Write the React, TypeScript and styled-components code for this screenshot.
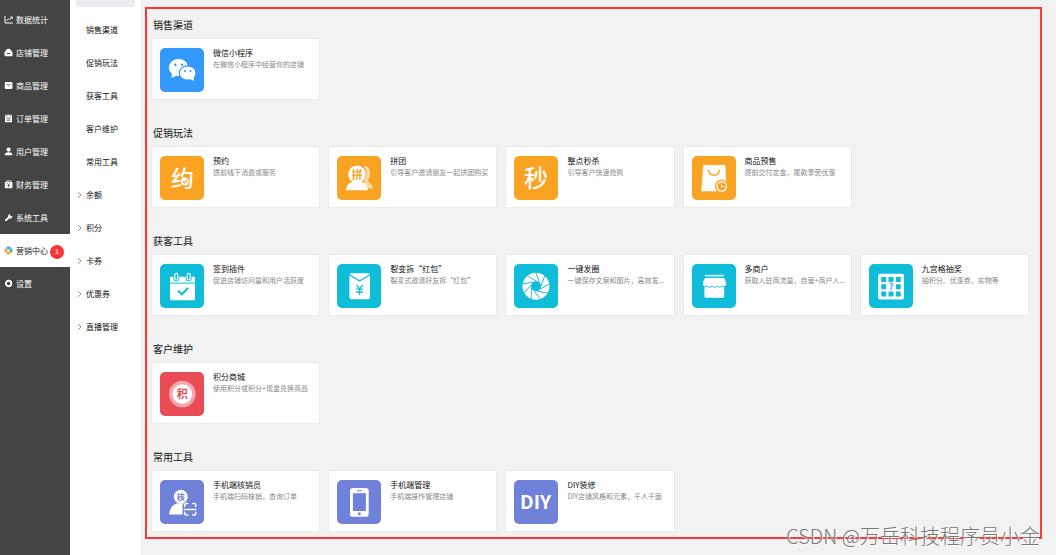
import React from "react";
import styled, { createGlobalStyle } from "styled-components";

const GlobalStyle = createGlobalStyle`
  *, *::before, *::after { box-sizing: border-box; }
  body {
    margin: 0;
    background: #f2f2f2;
    color: #111;
    font-family: "Noto Sans CJK SC", "Liberation Sans", sans-serif;
    font-size: 8px;
  }
  a { color: inherit; text-decoration: none; }
  h2, h3, p, ul { margin: 0; padding: 0; font-weight: 400; }
  ul { list-style: none; }
`;

const Page = styled.div`
  position: relative;
  display: flex;
  min-height: 100vh;
`;

const Sidebar = styled.nav`
  flex: 0 0 70px;
  padding-top: 3px;
  background: #444;
`;

const SideLink = styled.a<{ $active?: boolean }>`
  display: flex;
  align-items: center;
  gap: 3px;
  height: 33px;
  padding-left: 4px;
  line-height: 12px;
  white-space: nowrap;
  color: ${(p) => (p.$active ? "#222" : "#fff")};
  background: ${(p) => (p.$active ? "#fff" : "transparent")};

  svg { flex: none; width: 9px; height: 9px; }
`;

const Badge = styled.span`
  display: flex;
  align-items: center;
  justify-content: center;
  width: 14px;
  height: 14px;
  margin-top: 3px;
  margin-left: -1px;
  border-radius: 50%;
  background: #fb3434;
  color: #fff;
  font-family: "Liberation Sans", sans-serif;
`;

const SubMenu = styled.nav`
  flex: 0 0 72px;
  border-right: 1px solid #e9e9ec;
  background: #fff;
`;

const SubHead = styled.div`
  height: 7px;
  margin: 0 6px 6px;
  border-radius: 0 0 2px 2px;
  background: #ebecf0;
`;

const SubLink = styled.a`
  display: grid;
  grid-template-columns: 5px 1fr;
  align-items: center;
  gap: 4px;
  height: 33px;
  padding-left: 7px;
  line-height: 12px;
  white-space: nowrap;

  span { grid-column: 2; }
  svg { width: 5px; height: 8px; }
`;

const Main = styled.main`
  flex: 1;
  min-width: 0;
  padding: 7px 14px 16px 3px;
`;

const Frame = styled.div`
  display: flex;
  flex-direction: column;
  gap: 26px;
  padding: 8px 11px 5px 4px;
  border: 2px solid #fd3838;
`;

const SectionTitle = styled.h2`
  margin: 0 0 5px 2px;
  font-size: 10px;
  line-height: 16px;

  section + section > & { margin-top: -1px; }
`;

const Cards = styled.div`
  display: grid;
  grid-template-columns: repeat(5, minmax(0, 1fr));
  gap: 8px;
`;

const Card = styled.a`
  display: flex;
  gap: 9px;
  height: 62px;
  padding: 9px 0 9px 8px;
  border: 1px solid #ebebeb;
  background: #fff;
`;

const Tile = styled.svg`
  flex: none;
  width: 44px;
  height: 44px;
  border-radius: 5px;
  background: ${(p) => p.color};
  font-family: "Noto Sans CJK SC", "Liberation Sans", sans-serif;
  text-anchor: middle;
`;

const CardText = styled.div`
  min-width: 0;
`;

const CardTitle = styled.h3`
  font-size: 8px;
  line-height: 10px;
`;

const CardDesc = styled.p`
  overflow: hidden;
  font-size: 7px;
  line-height: 13px;
  color: #888;
  white-space: nowrap;
  text-overflow: ellipsis;
`;

const Watermark = styled.div`
  position: absolute;
  right: 16px;
  bottom: 4px;
  font-size: 20px;
  font-weight: 300;
  line-height: 30px;
  color: #777;
  text-shadow: 1px 1px 0 #fff;
  white-space: nowrap;
  pointer-events: none;
`;

const BLUE = "#3399ff";
const ORANGE = "#faa323";
const TEAL = "#0fbdd9";
const RED = "#e94c55";
const PURPLE = "#7081d9";

const WechatArt = () => (
  <g fill="#fff">
    <path d="M12 25 L11.5 30 L17 27.5Z" />
    <ellipse cx="18.5" cy="19.5" rx="9.7" ry="8.5" />
    <ellipse cx="27.7" cy="25" rx="8.4" ry="7.2" stroke={BLUE} strokeWidth="1.2" />
    <path d="M30 31 L34 33 L33.5 28Z" />
    <g fill={BLUE}>
      <circle cx="15.3" cy="16.8" r="1.2" />
      <circle cx="22" cy="16.8" r="1.2" />
      <circle cx="25" cy="23" r="1" />
      <circle cx="30.5" cy="23" r="1" />
    </g>
  </g>
);

const BookingArt = () => (
  <>
    <text x="22.5" y="30.5" fontSize="23" fontWeight="500" fill="#fff">约</text>
    <circle cx="24.8" cy="25.5" r="4" fill="#fff" />
    <path d="M22.8 25.4 L24.4 27 L27.2 24.2" fill="none" stroke={ORANGE} strokeWidth="1.2" />
  </>
);

const GroupArt = () => (
  <>
    <path
      d="M26 9.5 C31 9.5 33.5 13.5 33 18 C32.8 21 31.5 22.5 31 24 C31.2 27 35.5 27.5 36 32.5 L31.5 32.5 C30.5 28.5 27 27 27 25 C31 20 30.5 13.5 26 9.5Z"
      fill="#fff"
      opacity="0.6"
    />
    <circle cx="20" cy="18.3" r="8.8" fill="#fff" />
    <path d="M9 34.2 C9 28.5 13 26.3 17 25.5 H23 C27 26.3 31 28.5 31 34.2Z" fill="#fff" />
    <text x="20" y="22.5" fontSize="11" fontWeight="700" fill={ORANGE}>拼</text>
  </>
);

const SeckillArt = () => (
  <text x="22" y="31" fontSize="24" fontWeight="500" fill="#fff">秒</text>
);

const PresaleArt = () => (
  <>
    <path d="M11.5 9.3 H33 L34.3 35 H9.7Z" fill="#fff" stroke="#fff" strokeWidth="0.6" strokeLinejoin="round" />
    <path d="M16.5 14 C17.5 21 26.5 21 27.5 14" fill="none" stroke={ORANGE} strokeWidth="1.5" />
    <circle cx="29.7" cy="30.3" r="6.8" fill={ORANGE} />
    <circle cx="29.7" cy="30.3" r="4.8" fill="none" stroke="#fff" strokeWidth="1.3" />
    <path d="M29.5 27.5 V30.8 H32.3" fill="none" stroke="#fff" strokeWidth="1.1" />
  </>
);

const SignInArt = () => (
  <>
    <rect x="10" y="12.7" width="25" height="23.6" rx="1" fill="#fff" />
    <path d="M10 19.1 H35" stroke={TEAL} strokeWidth="1" />
    {[16.3, 28.7].map((x) => (
      <g key={x}>
        <rect x={x - 2.9} y="8" width="5.8" height="9.3" rx="2.9" fill={TEAL} />
        <rect x={x - 1.5} y="9.4" width="3" height="6.6" rx="1.5" fill={TEAL} stroke="#fff" strokeWidth="1.2" />
      </g>
    ))}
    <path d="M18 26.5 L21.8 30.3 L28 24" fill="none" stroke={TEAL} strokeWidth="2" />
  </>
);

const RedPacketArt = () => (
  <>
    <rect x="12.4" y="9.3" width="20.6" height="26" rx="2.2" fill="#fff" />
    <path d="M12 10.5 L22.6 17 L33.4 10.5" fill="none" stroke={TEAL} strokeWidth="1.3" />
    <path
      d="M19.6 20.8 L22.6 25 L25.6 20.8 M22.6 25 V31 M19.2 25.2 H26 M19.2 28 H26"
      fill="none"
      stroke={TEAL}
      strokeWidth="1.3"
    />
  </>
);

const ApertureArt = () => (
  <>
    <circle cx="22" cy="22.3" r="13.5" fill="#fff" />
    <circle cx="22" cy="22.3" r="5" fill={TEAL} />
    {[0, 1, 2, 3, 4, 5, 6, 7, 8].map((i) => (
      <path
        key={i}
        d="M22.8 17.4 L13.2 11.8"
        stroke={TEAL}
        strokeWidth="0.9"
        transform={`rotate(${i * 40} 22 22.3)`}
      />
    ))}
  </>
);

const ShopArt = () => (
  <>
    <rect x="12.8" y="10.7" width="19.4" height="1.8" rx="0.8" fill="#fff" opacity="0.8" />
    <rect x="12.4" y="20" width="19.8" height="13.7" rx="1.5" fill="#fff" />
    <path
      d="M13 13.5 H32 C33.5 15.5 34.6 18 34.6 20.5 A3 3 0 0 1 29.8 22 A3 3 0 0 1 24.9 22 A3 3 0 0 1 20.1 22 A3 3 0 0 1 15.2 22 A3 3 0 0 1 10.4 20.5 C10.4 18 11.5 15.5 13 13.5Z"
      fill="#fff"
      stroke={TEAL}
      strokeWidth="0.9"
    />
  </>
);

const LotteryArt = () => (
  <>
    <rect x="9.2" y="9.8" width="25.8" height="25.8" rx="2" fill="#fff" />
    {[12.4, 19.6, 26.8].map((y, row) =>
      [12.2, 19.5, 26.8].map((x, col) =>
        row === 1 && col === 1 ? null : (
          <rect key={`${x}-${y}`} x={x} y={y + 0.6} width="5" height="5" rx="0.6" fill={TEAL} />
        )
      )
    )}
    <text x="22.1" y="26" fontSize="9" fontWeight="700" fill={TEAL}>?</text>
  </>
);

const PointsArt = () => (
  <>
    <circle cx="22.3" cy="22" r="13.3" fill="#fff" opacity="0.5" />
    <circle cx="22.3" cy="22" r="9.8" fill="#fff" />
    <text x="22.3" y="26.2" fontSize="11" fontWeight="700" fill={RED}>积</text>
  </>
);

const VerifierArt = () => (
  <>
    <circle cx="20.8" cy="16.7" r="7" fill="#fff" />
    <path d="M9.3 34.6 C9.5 28 13 24.5 17.5 23.2 H24 L22.5 25 V34.6Z" fill="#fff" />
    <text x="20.8" y="19.5" fontSize="8" fontWeight="700" fill={PURPLE}>核</text>
    <g fill="none" stroke="#fff" strokeWidth="1.5" strokeLinecap="round">
      <path d="M24.7 26.5 V25 Q24.7 23.6 26.1 23.6 H27.8" />
      <path d="M32.6 23.6 H34.3 Q35.7 23.6 35.7 25 V26.5" />
      <path d="M24.7 32.2 V33.7 Q24.7 35.1 26.1 35.1 H27.8" />
      <path d="M32.6 35.1 H34.3 Q35.7 35.1 35.7 33.7 V32.2" />
      <path d="M24.3 29.4 H36" />
    </g>
  </>
);

const PhoneArt = () => (
  <>
    <rect x="13" y="8" width="18.7" height="28.7" rx="2.8" fill="#fff" />
    <rect x="15.9" y="13.2" width="13" height="17.8" fill={PURPLE} />
    <rect x="19.8" y="10.3" width="5.2" height="1" rx="0.5" fill={PURPLE} />
    <circle cx="22.3" cy="33.8" r="1.5" fill={PURPLE} />
  </>
);

const DiyArt = () => (
  <text x="21.5" y="29" fontSize="19" fontWeight="700" fill="#fff">DIY</text>
);

type Item = { title: string; desc: string; Art: () => React.JSX.Element };
type Section = { title: string; color: string; items: Item[] };

const sections: Section[] = [
  {
    title: "销售渠道",
    color: BLUE,
    items: [{ title: "微信小程序", desc: "在微信小程序中经营你的店铺", Art: WechatArt }],
  },
  {
    title: "促销玩法",
    color: ORANGE,
    items: [
      { title: "预约", desc: "提前线下消费或服务", Art: BookingArt },
      { title: "拼团", desc: "引导客户邀请朋友一起拼团购买", Art: GroupArt },
      { title: "整点秒杀", desc: "引导客户快速抢购", Art: SeckillArt },
      { title: "商品预售", desc: "提前交付定金，尾款享受优惠", Art: PresaleArt },
    ],
  },
  {
    title: "获客工具",
    color: TEAL,
    items: [
      { title: "签到插件", desc: "促进店铺访问量和用户活跃度", Art: SignInArt },
      { title: "裂变拆“红包”", desc: "裂变式邀请好友拆“红包”", Art: RedPacketArt },
      { title: "一键发圈", desc: "一键保存文案和图片，高效发...", Art: ApertureArt },
      { title: "多商户", desc: "获取入驻商流量，自营+商户入...", Art: ShopArt },
      { title: "九宫格抽奖", desc: "抽积分、优惠券、实物等", Art: LotteryArt },
    ],
  },
  {
    title: "客户维护",
    color: RED,
    items: [{ title: "积分商城", desc: "使用积分或积分+现金兑换商品", Art: PointsArt }],
  },
  {
    title: "常用工具",
    color: PURPLE,
    items: [
      { title: "手机端核销员", desc: "手机端扫码核销，查询订单", Art: VerifierArt },
      { title: "手机端管理", desc: "手机端操作管理店铺", Art: PhoneArt },
      { title: "DIY装修", desc: "DIY店铺风格和元素，千人千面", Art: DiyArt },
    ],
  },
];

const sideItems: { label: string; icon: React.ReactNode; active?: boolean; badge?: number }[] = [
  {
    label: "数据统计",
    icon: (
      <g fill="none" stroke="#fff">
        <path d="M1 1 V8 H9" />
        <path d="M2.5 5.8 L4.3 3.6 L5.7 4.8 L8 2.2 M6.3 2 H8.3 V4" strokeWidth="0.9" />
      </g>
    ),
  },
  {
    label: "店铺管理",
    icon: (
      <>
        <path d="M4.5 0.8 C6.3 0.8 7 2 7.2 2.8 L8.5 4.2 V7.2 Q8.5 8.2 7.5 8.2 H1.5 Q0.5 8.2 0.5 7.2 V4.2 L1.8 2.8 C2 2 2.7 0.8 4.5 0.8Z" fill="#fff" />
        <path d="M2.8 5.5 H6.2" stroke="#444" />
      </>
    ),
  },
  {
    label: "商品管理",
    icon: (
      <>
        <rect x="0.8" y="1" width="7.6" height="7" rx="0.8" fill="#fff" />
        <path d="M2.7 3 Q4.6 5.5 6.5 3" fill="none" stroke="#444" strokeWidth="0.9" />
      </>
    ),
  },
  {
    label: "订单管理",
    icon: (
      <>
        <rect x="1" y="0.8" width="7" height="7.5" rx="0.6" fill="#fff" />
        <path d="M2.7 0.8 V2.5 M6.3 0.8 V2.5 M2.5 4.2 H6.5 M2.5 6.2 H6.5" stroke="#444" strokeWidth="0.8" />
      </>
    ),
  },
  {
    label: "用户管理",
    icon: (
      <g fill="#fff">
        <circle cx="4.6" cy="2.6" r="2.1" />
        <path d="M0.8 8.2 C0.8 5.8 2.5 5.2 4.6 5.2 C6.7 5.2 8.4 5.8 8.4 8.2Z" />
      </g>
    ),
  },
  {
    label: "财务管理",
    icon: (
      <>
        <path d="M2 1 H7.5" stroke="#fff" strokeWidth="0.9" />
        <rect x="0.8" y="2" width="7.6" height="6.3" rx="0.8" fill="#fff" />
        <path d="M3.2 3.2 L4.6 4.8 L6 3.2 M4.6 4.8 V7.3 M3.3 5.6 H5.9" fill="none" stroke="#444" strokeWidth="0.7" />
      </>
    ),
  },
  {
    label: "系统工具",
    icon: (
      <path
        d="M0.8 7 L4 4 C3.6 2.4 4.8 0.8 6.8 1 L5.7 2.3 L6.8 3.6 L8.4 2.7 C8.7 4.8 6.9 6 5.2 5.4 L2.2 8.3 Q1.2 8.4 0.8 7Z"
        fill="#fff"
      />
    ),
  },
  {
    label: "营销中心",
    active: true,
    badge: 1,
    icon: (
      <>
        <path d="M4.5 4.2 L2 1.8 A3.2 3.2 0 0 1 7 1.8Z" fill="#4aa0f5" />
        <path d="M4.8 4.5 L7.2 2 A3.2 3.2 0 0 1 7.2 7Z" fill="#19c8a0" />
        <path d="M4.5 4.8 L7 7.2 A3.2 3.2 0 0 1 2 7.2Z" fill="#ffab2e" />
        <path d="M4.2 4.5 L1.8 7 A3.2 3.2 0 0 1 1.8 2Z" fill="#ff9a3d" />
        <circle cx="4.5" cy="4.5" r="1.1" fill="#fff" />
      </>
    ),
  },
  {
    label: "设置",
    icon: <circle cx="4.6" cy="4.5" r="2.7" fill="none" stroke="#fff" strokeWidth="1.9" />,
  },
];

const subItems = [
  { label: "销售渠道" },
  { label: "促销玩法" },
  { label: "获客工具" },
  { label: "客户维护" },
  { label: "常用工具" },
  { label: "余额", expandable: true },
  { label: "积分", expandable: true },
  { label: "卡券", expandable: true },
  { label: "优惠券", expandable: true },
  { label: "直播管理", expandable: true },
];

export default function App() {
  return (
    <>
      <GlobalStyle />
      <Page>
        <Sidebar>
          {sideItems.map((item) => (
            <SideLink key={item.label} href="#" $active={item.active}>
              <svg viewBox="0 0 9 9" aria-hidden="true">{item.icon}</svg>
              {item.label}
              {item.badge && <Badge>{item.badge}</Badge>}
            </SideLink>
          ))}
        </Sidebar>
        <SubMenu>
          <SubHead />
          {subItems.map((item) => (
            <SubLink key={item.label} href="#">
              {item.expandable && (
                <svg viewBox="0 0 5 8" aria-hidden="true">
                  <path d="M1 1.2 L4 4 L1 6.8" fill="none" stroke="#777" strokeWidth="0.8" />
                </svg>
              )}
              <span>{item.label}</span>
            </SubLink>
          ))}
        </SubMenu>
        <Main>
          <Frame>
            {sections.map((section) => (
              <section key={section.title}>
                <SectionTitle>{section.title}</SectionTitle>
                <Cards>
                  {section.items.map(({ title, desc, Art }) => (
                    <Card key={title} href="#">
                      <Tile viewBox="0 0 44 44" color={section.color} aria-hidden="true">
                        <Art />
                      </Tile>
                      <CardText>
                        <CardTitle>{title}</CardTitle>
                        <CardDesc>{desc}</CardDesc>
                      </CardText>
                    </Card>
                  ))}
                </Cards>
              </section>
            ))}
          </Frame>
        </Main>
        <Watermark>CSDN @万岳科技程序员小金</Watermark>
      </Page>
    </>
  );
}
